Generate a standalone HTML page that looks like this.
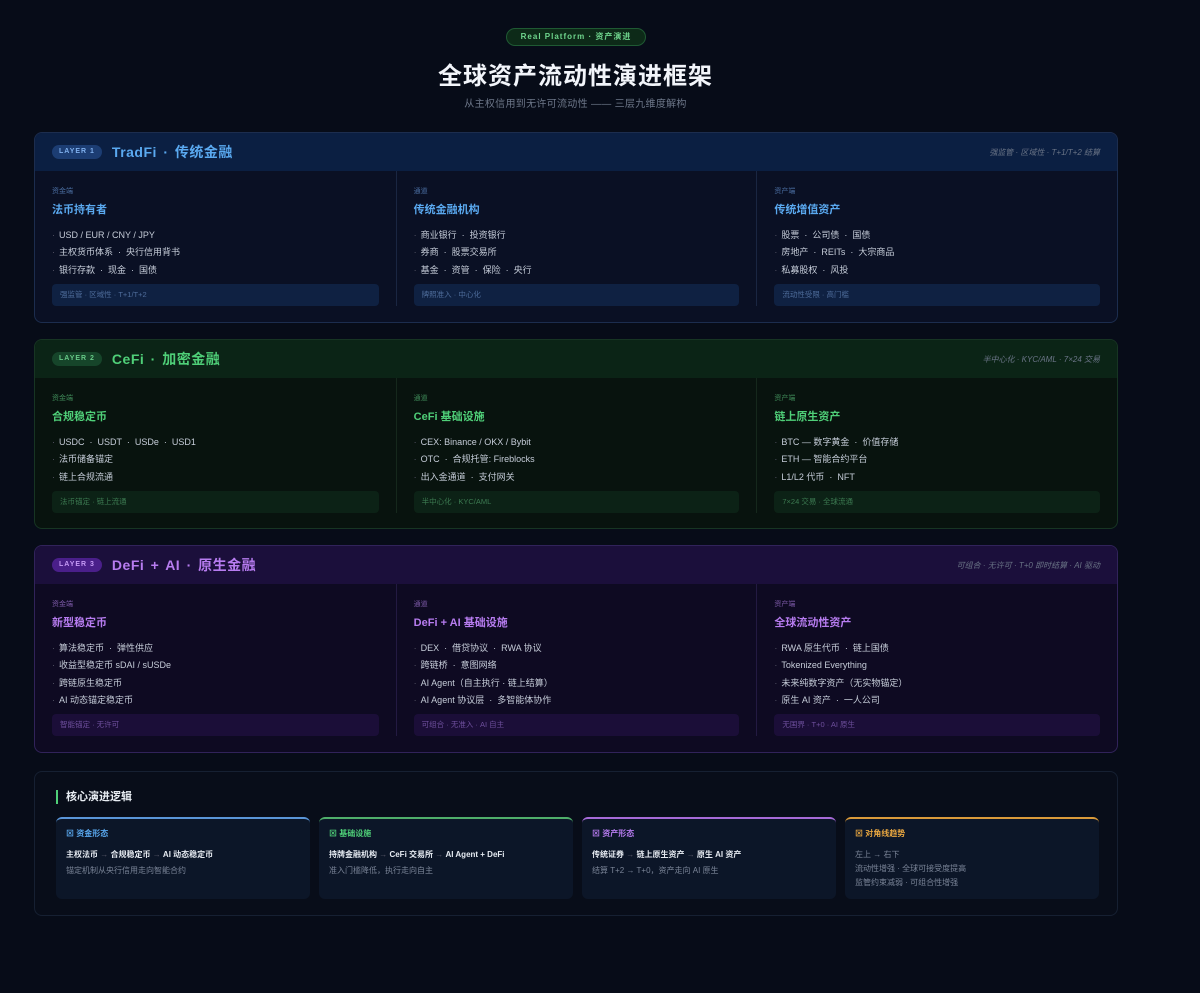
<!DOCTYPE html>
<html><head><meta charset="utf-8"><style>
*{margin:0;padding:0;box-sizing:border-box}
body{width:1200px;height:993px;background:#070c18;font-family:"Liberation Sans","Noto Sans CJK SC",sans-serif;color:#c9d1de;position:relative;overflow:hidden}
.pill{position:absolute;left:506px;top:28px;width:140px;height:18px;border-radius:9px;background:#0d2a18;border:1px solid #1f5a33;color:#6fd58d;font-size:8px;letter-spacing:1px;text-align:center;line-height:16px;font-weight:bold}
h1{position:absolute;left:0;width:1151px;top:56px;text-align:center;font-size:24px;color:#f2f5fa;letter-spacing:1px;font-weight:bold}
.sub{position:absolute;left:0;width:1151px;top:95px;text-align:center;font-size:10px;color:#6d7789;letter-spacing:.3px}
.layer{position:absolute;left:34px;width:1084px;border-radius:8px;overflow:hidden}
.hd{height:38px;display:flex;align-items:center;padding:0 17px;position:relative}
.badge{font-size:7px;font-weight:bold;letter-spacing:1px;padding:0 7px;height:14px;line-height:14px;border-radius:7px;margin-right:10px}
.ht{font-size:14px;font-weight:bold;letter-spacing:.5px;word-spacing:2px}
.hr{position:absolute;right:17px;font-size:8px;font-style:italic;color:#6a7486}
.cols{display:flex}
.col{width:361.3px;padding:15px 17px 0 17px;position:relative}
.col+.col{border-left:1px solid}
.lb{font-size:7px;margin-bottom:5px}
.tt{font-size:11px;font-weight:bold;margin-bottom:10px}
.li{font-size:9px;color:#c5ccd8;height:17.3px;line-height:17.3px}
.li:before{content:"·";margin-right:4px;color:#556}
.tag{margin-top:5px;height:22px;border-radius:4px;font-size:7.5px;line-height:22px;padding-left:8px}
.l1{top:132px;height:191px;border:1px solid #1c2d4e;background:#0a1024}
.l1 .hd{background:#0b1f42}.l1 .badge{background:#1c3d73;color:#7fb0ee}.l1 .ht,.l1 .tt{color:#5aa9f0}.l1 .lb{color:#4a6da0}.l1 .col+.col{border-color:#1a2642}.l1 .tag{background:#0f2142;color:#4e6c9a}
.l2{top:339px;height:190px;border:1px solid #173523;background:#08130e}
.l2 .hd{background:#0b2416}.l2 .badge{background:#16452a;color:#67c987}.l2 .ht,.l2 .tt{color:#4fcf78}.l2 .lb{color:#3f8a58}.l2 .col+.col{border-color:#15281c}.l2 .tag{background:#0c2216;color:#3c7a51}
.l3{top:545px;height:208px;border:1px solid #31235a;background:#0e0a22}
.l3 .hd{background:#1b0f3b}.l3 .badge{background:#4a1f8a;color:#c59af5}.l3 .ht,.l3 .tt{color:#b77cf0}.l3 .lb{color:#7d5aa8}.l3 .col+.col{border-color:#231a42}.l3 .tag{background:#1b0e38;color:#6e4f9c}
.bot{position:absolute;left:34px;top:771px;width:1084px;height:145px;border:1px solid #162032;border-radius:8px;background:#080d19}
.bt{position:absolute;left:21px;top:18px;font-size:11px;font-weight:bold;color:#e8edf3;border-left:2px solid #4fcf78;padding-left:8px;line-height:14px}
.card{position:absolute;top:45px;width:254px;height:82px;border-radius:6px;background:#0c1628;border-top:2px solid;padding:9px 10px}
.ch{font-size:8px;font-weight:bold;margin-bottom:10px}
.cm{font-size:8px;font-weight:bold;color:#e6ebf2;margin-bottom:4px}
.cm span{color:#556;font-weight:normal}
.cs{font-size:8px;color:#7a8497;line-height:14px}
</style></head><body>
<div class="pill">Real Platform · 资产演进</div>
<h1>全球资产流动性演进框架</h1>
<div class="sub">从主权信用到无许可流动性 —— 三层九维度解构</div>

<div class="layer l1"><div class="hd"><span class="badge">LAYER 1</span><span class="ht">TradFi · 传统金融</span><span class="hr">强监管 · 区域性 · T+1/T+2 结算</span></div>
<div class="cols">
<div class="col"><div class="lb">资金端</div><div class="tt">法币持有者</div><div class="li">USD / EUR / CNY / JPY</div><div class="li">主权货币体系 &nbsp;·&nbsp; 央行信用背书</div><div class="li">银行存款 &nbsp;·&nbsp; 现金 &nbsp;·&nbsp; 国债</div><div class="tag">强监管 · 区域性 · T+1/T+2</div></div>
<div class="col"><div class="lb">通道</div><div class="tt">传统金融机构</div><div class="li">商业银行 &nbsp;·&nbsp; 投资银行</div><div class="li">券商 &nbsp;·&nbsp; 股票交易所</div><div class="li">基金 &nbsp;·&nbsp; 资管 &nbsp;·&nbsp; 保险 &nbsp;·&nbsp; 央行</div><div class="tag">牌照准入 · 中心化</div></div>
<div class="col"><div class="lb">资产端</div><div class="tt">传统增值资产</div><div class="li">股票 &nbsp;·&nbsp; 公司债 &nbsp;·&nbsp; 国债</div><div class="li">房地产 &nbsp;·&nbsp; REITs &nbsp;·&nbsp; 大宗商品</div><div class="li">私募股权 &nbsp;·&nbsp; 风投</div><div class="tag">流动性受限 · 高门槛</div></div>
</div></div>

<div class="layer l2"><div class="hd"><span class="badge">LAYER 2</span><span class="ht">CeFi · 加密金融</span><span class="hr">半中心化 · KYC/AML · 7×24 交易</span></div>
<div class="cols">
<div class="col"><div class="lb">资金端</div><div class="tt">合规稳定币</div><div class="li">USDC &nbsp;·&nbsp; USDT &nbsp;·&nbsp; USDe &nbsp;·&nbsp; USD1</div><div class="li">法币储备锚定</div><div class="li">链上合规流通</div><div class="tag">法币锚定 · 链上流通</div></div>
<div class="col"><div class="lb">通道</div><div class="tt">CeFi 基础设施</div><div class="li">CEX: Binance / OKX / Bybit</div><div class="li">OTC &nbsp;·&nbsp; 合规托管: Fireblocks</div><div class="li">出入金通道 &nbsp;·&nbsp; 支付网关</div><div class="tag">半中心化 · KYC/AML</div></div>
<div class="col"><div class="lb">资产端</div><div class="tt">链上原生资产</div><div class="li">BTC — 数字黄金 &nbsp;·&nbsp; 价值存储</div><div class="li">ETH — 智能合约平台</div><div class="li">L1/L2 代币 &nbsp;·&nbsp; NFT</div><div class="tag">7×24 交易 · 全球流通</div></div>
</div></div>

<div class="layer l3"><div class="hd"><span class="badge">LAYER 3</span><span class="ht">DeFi + AI · 原生金融</span><span class="hr">可组合 · 无许可 · T+0 即时结算 · AI 驱动</span></div>
<div class="cols">
<div class="col"><div class="lb">资金端</div><div class="tt">新型稳定币</div><div class="li">算法稳定币 &nbsp;·&nbsp; 弹性供应</div><div class="li">收益型稳定币 sDAI / sUSDe</div><div class="li">跨链原生稳定币</div><div class="li">AI 动态锚定稳定币</div><div class="tag">智能锚定 · 无许可</div></div>
<div class="col"><div class="lb">通道</div><div class="tt">DeFi + AI 基础设施</div><div class="li">DEX &nbsp;·&nbsp; 借贷协议 &nbsp;·&nbsp; RWA 协议</div><div class="li">跨链桥 &nbsp;·&nbsp; 意图网络</div><div class="li">AI Agent（自主执行 · 链上结算）</div><div class="li">AI Agent 协议层 &nbsp;·&nbsp; 多智能体协作</div><div class="tag">可组合 · 无准入 · AI 自主</div></div>
<div class="col"><div class="lb">资产端</div><div class="tt">全球流动性资产</div><div class="li">RWA 原生代币 &nbsp;·&nbsp; 链上国债</div><div class="li">Tokenized Everything</div><div class="li">未来纯数字资产（无实物锚定）</div><div class="li">原生 AI 资产 &nbsp;·&nbsp; 一人公司</div><div class="tag">无国界 · T+0 · AI 原生</div></div>
</div></div>

<div class="bot"><div class="bt">核心演进逻辑</div>
<div class="card" style="left:21px;border-color:#5a95d8"><div class="ch" style="color:#5aa9f0">⊠ 资金形态</div><div class="cm">主权法币 <span>→</span> 合规稳定币 <span>→</span> AI 动态稳定币</div><div class="cs">锚定机制从央行信用走向智能合约</div></div>
<div class="card" style="left:284px;border-color:#4fae6a"><div class="ch" style="color:#4fcf78">⊠ 基础设施</div><div class="cm">持牌金融机构 <span>→</span> CeFi 交易所 <span>→</span> AI Agent + DeFi</div><div class="cs">准入门槛降低，执行走向自主</div></div>
<div class="card" style="left:547px;border-color:#a66ad8"><div class="ch" style="color:#b77cf0">⊠ 资产形态</div><div class="cm">传统证券 <span>→</span> 链上原生资产 <span>→</span> 原生 AI 资产</div><div class="cs">结算 T+2 → T+0，资产走向 AI 原生</div></div>
<div class="card" style="left:810px;border-color:#d99a3a"><div class="ch" style="color:#e8a640">⊠ 对角线趋势</div><div class="cs" style="margin-top:-1px">左上 → 右下</div><div class="cs">流动性增强 · 全球可接受度提高</div><div class="cs">监管约束减弱 · 可组合性增强</div></div>
</div>
</body></html>
